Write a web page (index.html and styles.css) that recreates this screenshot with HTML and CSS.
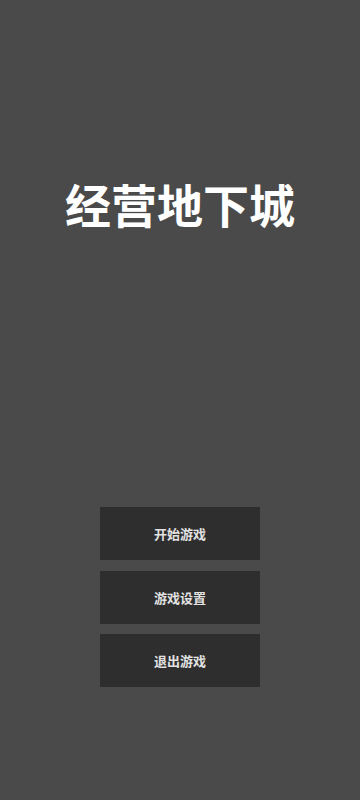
FILE: index.html
```html
<!DOCTYPE html>
<html lang="zh-CN">
<head>
    <meta charset="UTF-8">
    <meta name="viewport" content="width=device-width, initial-scale=1.0">
    <title>经营地下城</title>
    <link rel="stylesheet" href="styles.css">
</head>
<body>
    <div class="screen">
        <h1 class="title">经营地下城</h1>
        <div class="menu">
            <button class="menu-btn">开始游戏</button>
            <button class="menu-btn">游戏设置</button>
            <button class="menu-btn">退出游戏</button>
        </div>
    </div>
</body>
</html>
```

FILE: styles.css
```css
* {
    margin: 0;
    padding: 0;
    box-sizing: border-box;
    font-family: "Noto Sans CJK SC", "Noto Sans", sans-serif;
}

body {
    background: #4a4a4a;
    min-height: 100vh;
}

.screen {
    display: flex;
    flex-direction: column;
    align-items: center;
    padding-top: 180px;
}

.title {
    color: #ffffff;
    font-size: 46px;
    line-height: 46px;
    font-weight: bold;
}

.menu {
    display: flex;
    flex-direction: column;
    gap: 10.5px;
    margin-top: 281px;
}

.menu-btn {
    width: 160px;
    height: 53px;
    background: #2e2e2e;
    color: #e2e2e2;
    border: none;
    font-size: 13px;
    font-weight: bold;
    cursor: pointer;
}
```
